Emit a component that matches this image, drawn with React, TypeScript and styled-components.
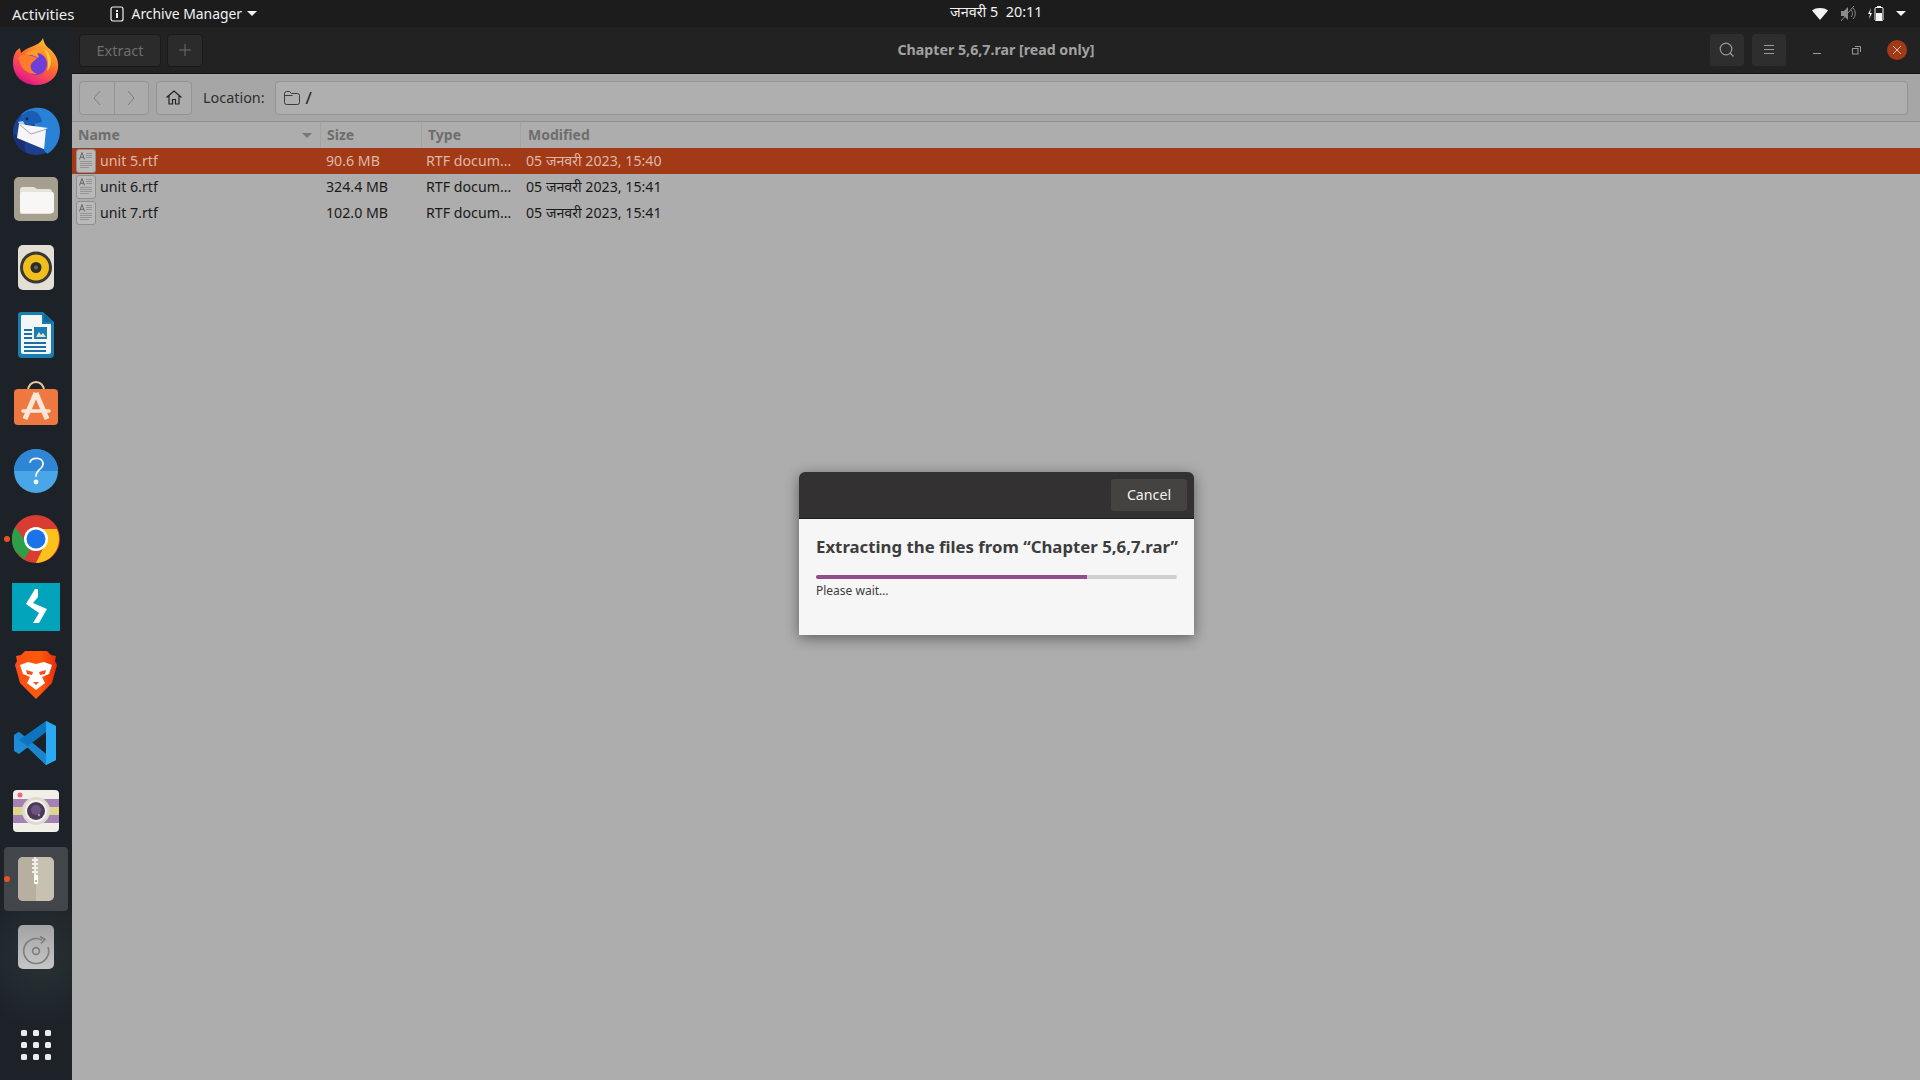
import React from "react";
import styled, { createGlobalStyle } from "styled-components";

const GlobalStyle = createGlobalStyle`
	html, body {
		margin: 0;
		padding: 0;
		height: 100%;
		overflow: hidden;
		background: #adadad;
		font-family: "Noto Sans", "Open Sans", "DejaVu Sans", sans-serif;
	}
`;

const files = [
	{ name: "unit 5.rtf", size: "90.6 MB", date: "05 जनवरी 2023, 15:40", selected: true },
	{ name: "unit 6.rtf", size: "324.4 MB", date: "05 जनवरी 2023, 15:41", selected: false },
	{ name: "unit 7.rtf", size: "102.0 MB", date: "05 जनवरी 2023, 15:41", selected: false },
];

const Firefox = () => (
	<svg width="48" height="50" viewBox="0 3 48 50">
		<defs>
			<linearGradient id="ffBase" x1="0.8" y1="0.1" x2="0.3" y2="1">
				<stop offset="0" stopColor="#ffbd2e" />
				<stop offset="0.45" stopColor="#ff6b2c" />
				<stop offset="0.85" stopColor="#ee2a7b" />
				<stop offset="1" stopColor="#d6127f" />
			</linearGradient>
		</defs>
		<path d="M31 3c1 6 4 9 8 12 5 5 8 11 7 18-1 10-10 17-22 17C11 50 1 41 1 28c0-8 3-13 7-15l1 5c3-3 7-5 10-6 5-2 10-4 12-9z" fill="url(#ffBase)" />
		<circle cx="24" cy="29" r="11" fill="#6d3fd8" />
		<path d="M13 19c6-5 15-6 21-2-4-1-7 0-9 2 2 1 2 3 1 4-3-3-8-3-13-4z" fill="#ff9a2b" />
		<path d="M6 23c2-3 6-4 9-3 4 1 8 1 10 3-1 2-4 3-5 5-3 3-1 9 5 11-8 1-16-5-17-12-1-2-1-3-2-4z" fill="#ff7b2c" />
		<path d="M32 14c5 3 8 9 7 15-1 3-2 5-4 7 2-7 1-15-3-22z" fill="#ffc93c" />
	</svg>
);

const Thunderbird = () => (
	<svg width="48" height="48" viewBox="0 0 48 48">
		<circle cx="24" cy="25" r="23" fill="#1d3f8f" />
		<path d="M9 8c5-6 13-8 20-7 10 1 19 11 19 23 0 9-4 16-10 21-1 1-2 1-3 2l-1-6-12-24z" fill="#2a82d6" />
		<path d="M6 15c2-7 9-12 15-11 5 1 8 5 9 11L14 19z" fill="#1a5db4" />
		<circle cx="15" cy="12" r="1.4" fill="#0c2a5c" />
		<path d="M6 15l5-1 2 4-4 2z" fill="#a9d4ee" />
		<path d="M1 26c0 8 5 16 13 20-1-4-2-8-1-11l-7-5z" fill="#1a2f74" />
		<path d="M7 17l29 4-2 22L5 31z" fill="#f6f6f8" />
		<path d="M8 18l11 9 16-5" fill="none" stroke="#a9a9ae" strokeWidth="1" />
		<path d="M36 21l7 2-3 5 6-1-4 6 3 1-6 5 1 3-6 4-2-3 2-21z" fill="#2a82d6" />
	</svg>
);

const Files = () => (
	<svg width="44" height="44" viewBox="0 0 44 44">
		<rect width="44" height="44" rx="5" fill="#a59f8f" />
		<path d="M6 13a3 3 0 0 1 3-3h10c2 0 3 2 5 2h11a3 3 0 0 1 3 3v20a2 2 0 0 1-2 2H8a2 2 0 0 1-2-2z" fill="#e6e3dc" />
		<path d="M6 18a2 2 0 0 1 2-2h30a2 2 0 0 1 2 2v17a2 2 0 0 1-2 2H8a2 2 0 0 1-2-2z" fill="#f8f7f5" transform="translate(0 -1)" />
	</svg>
);

const Rhythmbox = () => (
	<svg width="36" height="45" viewBox="0 0 36 45">
		<rect width="36" height="45" rx="5" fill="#e3dfd5" />
		<circle cx="18" cy="22.5" r="16" fill="#3a3835" />
		<circle cx="18" cy="22.5" r="13" fill="#f1bf1b" />
		<circle cx="18" cy="22.5" r="5.5" fill="#2e2c28" />
		<circle cx="18" cy="22.5" r="2" fill="#6a655c" />
	</svg>
);

const Writer = () => (
	<svg width="36" height="46" viewBox="0 0 36 46">
		<path d="M3 0h22l11 10v32a4 4 0 0 1-4 4H4a4 4 0 0 1-4-4V3a3 3 0 0 1 3-3z" fill="#1a7fb0" />
		<path d="M4 3h20v9h9v28a2 2 0 0 1-2 2H5a2 2 0 0 1-2-2V4z" fill="#f4f5f6" />
		<path d="M26 1l9 9h-9z" fill="#0f6a97" />
		<path d="M6 18h8M6 22h8M6 26h8M6 31h22M6 35h22M6 39h22" stroke="#1a6fa5" strokeWidth="2" />
		<rect x="16" y="15" width="13" height="12" fill="#1a7fb0" />
		<path d="M18 25l3-5 2 3 2-2 3 4z" fill="#e9e2c8" />
	</svg>
);

const Software = () => (
	<svg width="44" height="44" viewBox="0 0 44 44">
		<path d="M14 10c0-12 16-12 16 0" fill="none" stroke="#e9c9a0" strokeWidth="2" />
		<rect y="8" width="44" height="36" rx="4" fill="#ef7840" />
		<path d="M22 12L11 38M22 12l11 26" stroke="#fbe6da" strokeWidth="5" fill="none" />
		<path d="M9 30h26" stroke="#fbe6da" strokeWidth="3.5" strokeLinecap="round" />
	</svg>
);

const Help = () => (
	<svg width="44" height="44" viewBox="0 0 44 44">
		<circle cx="22" cy="22" r="22" fill="#4aa6e6" />
		<path d="M0 22a22 22 0 0 1 44 0z" fill="#2f86d4" />
		<path d="M16 13c2-5 12-5 13 1 1 6-7 6-7 13" fill="none" stroke="#f2f7fb" strokeWidth="1.8" strokeLinecap="round" />
		<circle cx="22" cy="33" r="2.4" fill="#f2f7fb" />
	</svg>
);

const Chrome = () => (
	<svg width="48" height="48" viewBox="0 0 48 48">
		<circle cx="24" cy="24" r="24" fill="#d93c31" />
		<path d="M24 24L3.2 36A24 24 0 0 1 3.2 12L12 24l12 0z" fill="#2f9e48" />
		<path d="M24 24l-12 20.8L3.2 36A24 24 0 0 1 1 24z" fill="#2f9e48" />
		<path d="M24 14h20.8A24 24 0 0 1 24 48l10-21z" fill="#fcc21b" />
		<circle cx="24" cy="24" r="12" fill="#fff" />
		<circle cx="24" cy="24" r="9.5" fill="#1a73e8" />
	</svg>
);

const Bolt = () => (
	<svg width="48" height="48" viewBox="0 0 48 48">
		<rect width="48" height="48" fill="#02a4bd" />
		<path d="M23 6h3v8l-5 6 14 6-8 14h-6l6-10-13-9z" fill="#fff" />
	</svg>
);

const Brave = () => (
	<svg width="42" height="48" viewBox="0 0 42 48">
		<defs>
			<linearGradient id="braveBg" x1="0" y1="0" x2="1" y2="0">
				<stop offset="0" stopColor="#ff4d17" />
				<stop offset="0.6" stopColor="#ff5a0a" />
				<stop offset="1" stopColor="#e62a10" />
			</linearGradient>
		</defs>
		<path d="M10 0h22l4 4 5 1-1 5 2 4-5 18-12 12-4 4-4-4L5 32 0 14l2-4-1-5 5-1z" fill="url(#braveBg)" />
		<path d="M5 14l8-3 8 2 8-2 8 3-3 9-7 3 3 6-9 7-9-7 3-6-7-3z" fill="#fff" />
		<path d="M11 19l7 2-1 3-5-1zM31 19l-7 2 1 3 5-1zM18 31h6l-3 3z" fill="#f4511e" />
	</svg>
);

const VsCode = () => (
	<svg width="44" height="44" viewBox="0 0 44 44">
		<path d="M32 0l10 5v34l-10 5L14 26l-9 7-5-3V14l5-3 27 22z" fill="#1f8ad6" />
		<path d="M32 0l10 5v34l-10 5z" fill="#2aaaf5" />
		<path d="M0 14l5-3 27 22v11L14 27 5 20z" fill="#1a86d0" />
		<path d="M32 0v11L14 25l-9-6z" fill="#0f74bf" />
	</svg>
);

const Camera = () => (
	<svg width="46" height="42" viewBox="0 0 46 42">
		<rect width="46" height="42" rx="4" fill="#f0efe8" />
		<rect y="9" width="46" height="8" fill="#a682b4" />
		<rect y="17" width="46" height="8" fill="#dcd68f" />
		<rect y="25" width="46" height="8" fill="#a682b4" />
		<circle cx="7" cy="5" r="2.5" fill="#f3627a" />
		<circle cx="23" cy="21" r="14" fill="#dedbd0" />
		<circle cx="23" cy="21" r="11" fill="#f4f2ea" />
		<circle cx="23" cy="21" r="9" fill="#4b3a5a" />
		<circle cx="23" cy="20" r="5" fill="#6c5580" />
		<circle cx="26" cy="25" r="1.2" fill="#a08bb4" />
	</svg>
);

const Archive = () => (
	<svg width="36" height="44" viewBox="0 0 36 44">
		<rect width="36" height="44" rx="5" fill="#c7c1b2" />
		<path d="M5 0h13v44H5a5 5 0 0 1-5-5V5a5 5 0 0 1 5-5z" fill="#b7b0a0" />
		<path d="M16 0h2v2h2v2h-2v2h2v2h-2v2h2v2h-2v2h2v2h-2v2h-2v-2h-2v-2h2v-2h-2v-2h2V8h-2V6h2V4h-2V2h2z" fill="#f1efe9" />
		<rect x="16" y="18" width="4" height="9" rx="1" fill="#fff" />
		<circle cx="18" cy="24" r="0.8" fill="#55514a" />
	</svg>
);

const Disc = () => (
	<svg width="36" height="44" viewBox="0 0 36 44">
		<defs>
			<linearGradient id="discBg" x1="0" y1="0" x2="0" y2="1">
				<stop offset="0" stopColor="#a3a3a3" />
				<stop offset="1" stopColor="#c6c6c6" />
			</linearGradient>
		</defs>
		<rect width="36" height="44" rx="5" fill="url(#discBg)" />
		<path d="M24 15a12.5 12.5 0 1 0 6 7" fill="none" stroke="#7d7d7d" strokeWidth="1.6" />
		<path d="M22 11.5l5 3-4 4" fill="none" stroke="#7d7d7d" strokeWidth="1.6" />
		<circle cx="18" cy="26" r="3.4" fill="none" stroke="#7d7d7d" strokeWidth="1.6" />
	</svg>
);

const AppGrid = () => (
	<svg width="30" height="30" viewBox="0 0 30 30" fill="#ececec">
		{[0, 12, 24].map((y) =>
			[0, 12, 24].map((x) => <rect key={`${x}-${y}`} x={x} y={y} width="6" height="6" rx="1.5" />)
		)}
	</svg>
);

const DocIcon = () => (
	<svg width="20" height="24" viewBox="0 0 20 24">
		<rect x="0.5" y="0.5" width="19" height="23" rx="2.5" fill="#b9b9b9" stroke="#8e8e8e" />
		<path d="M3.5 10.5l2.500-7 2.500 7M4.300 8.300h3.400" fill="none" stroke="#5e5e5e" strokeWidth="0.9" />
		<path d="M10 4.5h6M10 6.5h6M10 8.5h6M4 12.5h12M4 14.5h12M4 16.5h12M4 18.5h9" stroke="#8a8a8a" strokeWidth="0.8" />
	</svg>
);

const App = () => {
	return (
		<Screen>
			<GlobalStyle />
			<TopBar>
				<TopLeft>
					<Activities>Activities</Activities>
					<AppMenu>
						<svg width="14" height="16" viewBox="0 0 14 16">
							<rect x="1" y="1" width="12" height="14" rx="2" fill="none" stroke="#f2f2f2" strokeWidth="1.2" />
							<rect x="6" y="4" width="2" height="2" fill="#f2f2f2" />
							<rect x="6" y="7" width="2" height="5" fill="#f2f2f2" />
						</svg>
						Archive Manager
						<MenuCaret />
					</AppMenu>
				</TopLeft>
				<Clock>जनवरी 5&nbsp;&nbsp;20:11</Clock>
				<Tray>
					<svg width="16" height="12" viewBox="0 0 16 12">
						<path d="M0 2.5C4-.8 12-.8 16 2.5L8 12z" fill="#f5f5f5" />
					</svg>
					<svg width="16" height="15" viewBox="0 0 16 15">
						<path d="M1 5h3l4-4v13l-4-4H1z" fill="#8b8b8b" />
						<path d="M11 4c2 2 2 5 0 7M13 2c3 3 3 8 0 11M1 15L14 0" fill="none" stroke="#8b8b8b" strokeWidth="1" />
					</svg>
					<svg width="16" height="15" viewBox="0 0 16 15">
						<path d="M3 2L0 8h2l-1 5 3-6H2z" fill="#f5f5f5" />
						<rect x="7" y="1.5" width="8" height="13" rx="1" fill="none" stroke="#f5f5f5" />
						<rect x="9" y="0" width="4" height="1.5" fill="#f5f5f5" />
						<rect x="8" y="7" width="6" height="7" fill="#f5f5f5" />
					</svg>
					<Caret />
				</Tray>
			</TopBar>
			<Desktop>
				<Dock>
					<DockItem><Firefox /></DockItem>
					<DockItem><Thunderbird /></DockItem>
					<DockItem><Files /></DockItem>
					<DockItem><Rhythmbox /></DockItem>
					<DockItem><Writer /></DockItem>
					<DockItem><Software /></DockItem>
					<DockItem><Help /></DockItem>
					<DockItem $running><Chrome /></DockItem>
					<DockItem><Bolt /></DockItem>
					<DockItem><Brave /></DockItem>
					<DockItem><VsCode /></DockItem>
					<DockItem><Camera /></DockItem>
					<DockItem $running $active><Archive /></DockItem>
					<DockItem><Disc /></DockItem>
					<GridButton><AppGrid /></GridButton>
				</Dock>
				<Window>
					<HeaderBar>
						<HeaderGroup>
							<DarkButton $wide>Extract</DarkButton>
							<DarkButton>
								<svg width="12" height="12" viewBox="0 0 12 12">
									<path d="M6 0v12M0 6h12" stroke="#6d6d6d" strokeWidth="1" />
								</svg>
							</DarkButton>
						</HeaderGroup>
						<Title>Chapter 5,6,7.rar [read only]</Title>
						<HeaderRight>
							<IconButton>
								<svg width="16" height="16" viewBox="0 0 16 16" fill="none" stroke="#9a9a9a" strokeWidth="1.2">
									<circle cx="7" cy="7" r="5.8" />
									<path d="M11 11l3.5 3.5" />
								</svg>
							</IconButton>
							<IconButton>
								<svg width="12" height="10" viewBox="0 0 12 10" stroke="#9a9a9a" strokeWidth="1">
									<path d="M1 .5h10M1 4.5h10M1 8.5h10" />
								</svg>
							</IconButton>
							<WindowControls>
								<WindowControl>
									<svg width="10" height="10" viewBox="0 0 10 10">
										<path d="M1 8.5h8" stroke="#9a9a9a" strokeWidth="1" />
									</svg>
								</WindowControl>
								<WindowControl>
									<svg width="10" height="10" viewBox="0 0 10 10" fill="none" stroke="#9a9a9a" strokeWidth="1">
										<rect x="0.5" y="3.5" width="5.5" height="5.5" />
										<path d="M3 1.5h5.5V7" />
									</svg>
								</WindowControl>
								<CloseControl>
									<svg width="8" height="8" viewBox="0 0 8 8">
										<path d="M0 0l8 8M8 0L0 8" stroke="#d8c3ba" strokeWidth="1" />
									</svg>
								</CloseControl>
							</WindowControls>
						</HeaderRight>
					</HeaderBar>
					<LocationBar>
						<NavGroup>
							<NavButton>
								<svg width="12" height="16" viewBox="0 0 12 16" fill="none" stroke="#7d7d7d">
									<path d="M9 1L3 8l6 7" />
								</svg>
							</NavButton>
							<NavButton>
								<svg width="12" height="16" viewBox="0 0 12 16" fill="none" stroke="#7d7d7d">
									<path d="M3 1l6 7-6 7" />
								</svg>
							</NavButton>
						</NavGroup>
						<HomeButton>
							<svg width="16" height="15" viewBox="0 0 16 15" fill="none" stroke="#222" strokeWidth="1.2">
								<path d="M.5 7.5L8 1l7.5 6.5M3 6v8h3.5V9.5h3V14H13V6" />
							</svg>
						</HomeButton>
						<LocationLabel>Location:</LocationLabel>
						<LocationField>
							<svg width="16" height="14" viewBox="0 0 16 14" fill="none" stroke="#3b3b3b">
								<path d="M.5 2.5a2 2 0 0 1 2-2h3l2 2h6a2 2 0 0 1 2 2v7a2 2 0 0 1-2 2h-11a2 2 0 0 1-2-2zM.5 4.5h8" />
							</svg>
							<span>/</span>
						</LocationField>
					</LocationBar>
					<ColumnHeader>
						<ColumnCell $width={249}>
							Name
							<SortArrow />
						</ColumnCell>
						<ColumnCell $width={101}>Size</ColumnCell>
						<ColumnCell $width={99}>Type</ColumnCell>
						<ColumnCell $width={120} $last>Modified</ColumnCell>
					</ColumnHeader>
					<FileList>
						{files.map((file) => (
							<FileRow key={file.name} $selected={file.selected}>
								<NameCell>
									<DocIcon />
									<RowText>{file.name}</RowText>
								</NameCell>
								<SizeCell>{file.size}</SizeCell>
								<TypeCell>RTF docum…</TypeCell>
								<RowText>{file.date}</RowText>
							</FileRow>
						))}
					</FileList>
				</Window>
			</Desktop>
			<Dialog>
				<DialogHeader>
					<CancelButton>Cancel</CancelButton>
				</DialogHeader>
				<DialogBody>
					<DialogTitle>Extracting the files from “Chapter 5,6,7.rar”</DialogTitle>
					<Progress>
						<ProgressFill style={{ width: "75%" }} />
					</Progress>
					<DialogNote>Please wait…</DialogNote>
				</DialogBody>
			</Dialog>
		</Screen>
	);
};

export default App;

const Screen = styled.div`
	position: relative;
	display: flex;
	flex-direction: column;
	width: 1920px;
	height: 1080px;
	overflow: hidden;
`;

const TopBar = styled.div`
	position: relative;
	flex: 0 0 27px;
	display: flex;
	align-items: center;
	justify-content: space-between;
	padding: 0 14px 0 12px;
	background: #1c1c1c;
	color: #f2f2f2;
	font-size: 13.9px;
`;

const TopLeft = styled.div`
	display: flex;
	align-items: center;
	gap: 35px;
`;

const Activities = styled.span`
	color: #eeeeee;
	font-size: 15px;
`;

const AppMenu = styled.span`
	display: flex;
	align-items: center;
	gap: 8px;
`;

const Caret = styled.span`
	width: 0;
	height: 0;
	border-left: 5px solid transparent;
	border-right: 5px solid transparent;
	border-top: 5px solid #f2f2f2;
`;

const MenuCaret = styled(Caret)`
	margin-left: -3px;
`;

const Clock = styled.span`
	position: absolute;
	left: 950px;
	top: 2px;
	font-size: 14.4px;
	line-height: 20px;
`;

const Tray = styled.div`
	display: flex;
	align-items: center;
	gap: 12px;
`;

const Desktop = styled.div`
	flex: 1;
	display: flex;
	min-height: 0;
`;

const Dock = styled.nav`
	flex: 0 0 72px;
	display: flex;
	flex-direction: column;
	padding-top: 2px;
	background: radial-gradient(circle at 40px 930px, #2a3236 0, #1c2227 70px), #1c2227;
`;

const DockItem = styled.div<{ $running?: boolean; $active?: boolean }>`
	position: relative;
	flex: 0 0 68px;
	display: flex;
	align-items: center;
	justify-content: center;

	${(p) =>
		p.$active &&
		`
		&::before {
			content: "";
			position: absolute;
			inset: 2px 4px;
			border-radius: 4px;
			background: #42464a;
		}
	`}

	svg {
		position: relative;
	}

	${(p) =>
		p.$running &&
		`
		&::after {
			content: "";
			position: absolute;
			left: 4px;
			top: 31px;
			width: 6px;
			height: 6px;
			border-radius: 50%;
			background: #e9531f;
		}
	`}
`;

const GridButton = styled.div`
	margin-top: auto;
	padding-bottom: 20px;
	display: flex;
	justify-content: center;
`;

const Window = styled.main`
	flex: 1;
	display: flex;
	flex-direction: column;
	min-width: 0;
	background: #adadad;
`;

const HeaderBar = styled.header`
	position: relative;
	flex: 0 0 47px;
	box-sizing: border-box;
	display: flex;
	align-items: center;
	justify-content: space-between;
	padding: 0 13px 0 7px;
	background: #222222;
	border-bottom: 1px solid #121212;
`;

const HeaderGroup = styled.div`
	display: flex;
	gap: 6px;
`;

const DarkButton = styled.div<{ $wide?: boolean }>`
	box-sizing: border-box;
	width: ${(p) => (p.$wide ? "82px" : "36px")};
	height: 33px;
	display: flex;
	align-items: center;
	justify-content: center;
	padding-bottom: 1px;
	border: 1px solid #191919;
	border-radius: 4px;
	background: #2b2b2b;
	color: #6d6d6d;
	font-size: 14.5px;
`;

const Title = styled.div`
	position: absolute;
	left: 0;
	right: 0;
	padding-bottom: 1px;
	text-align: center;
	color: #a2a2a2;
	font-size: 14.2px;
	font-weight: 700;
`;

const HeaderRight = styled.div`
	display: flex;
	align-items: center;
	gap: 8px;
`;

const IconButton = styled.div`
	width: 34px;
	height: 32px;
	display: flex;
	align-items: center;
	justify-content: center;
	border-radius: 4px;
	background: #2f2e2e;
`;

const WindowControls = styled.div`
	display: flex;
	align-items: center;
	gap: 20px;
	margin-left: 13px;
`;

const WindowControl = styled.div`
	width: 20px;
	height: 20px;
	display: flex;
	align-items: center;
	justify-content: center;
`;

const CloseControl = styled(WindowControl)`
	border-radius: 50%;
	background: #a33a17;
`;

const LocationBar = styled.div`
	flex: 0 0 48px;
	box-sizing: border-box;
	display: flex;
	align-items: center;
	padding: 0 12px 0 7px;
	background: #a6a6a6;
	border-bottom: 1px solid #8f8f8f;
`;

const NavGroup = styled.div`
	display: flex;
	width: 70px;
	height: 34px;
	box-sizing: border-box;
	border: 1px solid #939393;
	border-radius: 4px;
	background: #ababab;
`;

const NavButton = styled.div`
	flex: 1;
	display: flex;
	align-items: center;
	justify-content: center;

	& + & {
		border-left: 1px solid #939393;
	}
`;

const HomeButton = styled.div`
	box-sizing: border-box;
	width: 36px;
	height: 34px;
	margin-left: 7px;
	display: flex;
	align-items: center;
	justify-content: center;
	border: 1px solid #939393;
	border-radius: 4px;
	background: #ababab;
`;

const LocationLabel = styled.span`
	margin: 0 10px 0 11px;
	color: #2e2e2e;
	font-size: 14.4px;
`;

const LocationField = styled.div`
	flex: 1;
	box-sizing: border-box;
	height: 34px;
	display: flex;
	align-items: center;
	gap: 6px;
	padding: 0 8px;
	border: 1px solid #939393;
	border-radius: 4px;
	background: #afafaf;
	color: #1c1c1c;
	font-size: 17px;
`;

const ColumnHeader = styled.div`
	flex: 0 0 26px;
	box-sizing: border-box;
	display: flex;
	background: #adadad;
`;

const ColumnCell = styled.div<{ $width: number; $last?: boolean }>`
	box-sizing: border-box;
	width: ${(p) => p.$width}px;
	display: flex;
	align-items: center;
	justify-content: space-between;
	padding: ${(p) => (p.$last ? "0 8px 2px 7px" : "0 8px 2px 6px")};
	border-right: ${(p) => (p.$last ? "none" : "1px solid #a3a3a3")};
	color: #6e6e6e;
	font-size: 14px;
	font-weight: 700;
	white-space: nowrap;
`;

const SortArrow = styled.span`
	width: 0;
	height: 0;
	margin-top: 2px;
	border-left: 5px solid transparent;
	border-right: 5px solid transparent;
	border-top: 5px solid #777777;
`;

const FileList = styled.div`
	display: flex;
	flex-direction: column;
`;

const FileRow = styled.div<{ $selected?: boolean }>`
	height: 26px;
	display: flex;
	align-items: center;
	background: ${(p) => (p.$selected ? "#a33a17" : "transparent")};
	color: ${(p) => (p.$selected ? "#dbb8a8" : "#1a1a1a")};
	font-size: 14.2px;
	white-space: nowrap;
`;

const RowText = styled.span`
	position: relative;
	top: -1px;
`;

const NameCell = styled.span`
	width: 254px;
	box-sizing: border-box;
	padding-left: 4px;
	display: flex;
	align-items: center;
	gap: 4px;
`;

const SizeCell = styled(RowText)`
	width: 100px;
`;

const TypeCell = styled(RowText)`
	width: 100px;
`;

const Dialog = styled.section`
	position: absolute;
	left: 799px;
	top: 472px;
	width: 395px;
	height: 163px;
	display: flex;
	flex-direction: column;
	border-radius: 6px 6px 0 0;
	overflow: hidden;
	box-shadow: 0 3px 14px rgba(0, 0, 0, 0.45);
`;

const DialogHeader = styled.div`
	flex: 0 0 47px;
	box-sizing: border-box;
	display: flex;
	justify-content: flex-end;
	padding: 7px 7px 0 0;
	background: #333131;
	border-bottom: 1px solid #1a1a1a;
`;

const CancelButton = styled.div`
	box-sizing: border-box;
	width: 76px;
	height: 32px;
	padding-bottom: 2px;
	display: flex;
	align-items: center;
	justify-content: center;
	border-radius: 3px;
	background: #454341;
	color: #f2f2f2;
	font-size: 14.2px;
`;

const DialogBody = styled.div`
	flex: 1;
	padding: 16px 17px 0;
	background: #f6f6f6;
`;

const DialogTitle = styled.div`
	color: #3d3d3d;
	font-size: 16.8px;
	font-weight: 700;
	white-space: nowrap;
`;

const Progress = styled.div`
	height: 4px;
	margin-top: 17px;
	border-radius: 2px;
	background: #cfcfcf;
	overflow: hidden;
`;

const ProgressFill = styled.div`
	height: 100%;
	background: #924d8b;
`;

const DialogNote = styled.div`
	margin-top: 3px;
	color: #3d3d3d;
	font-size: 12px;
`;
